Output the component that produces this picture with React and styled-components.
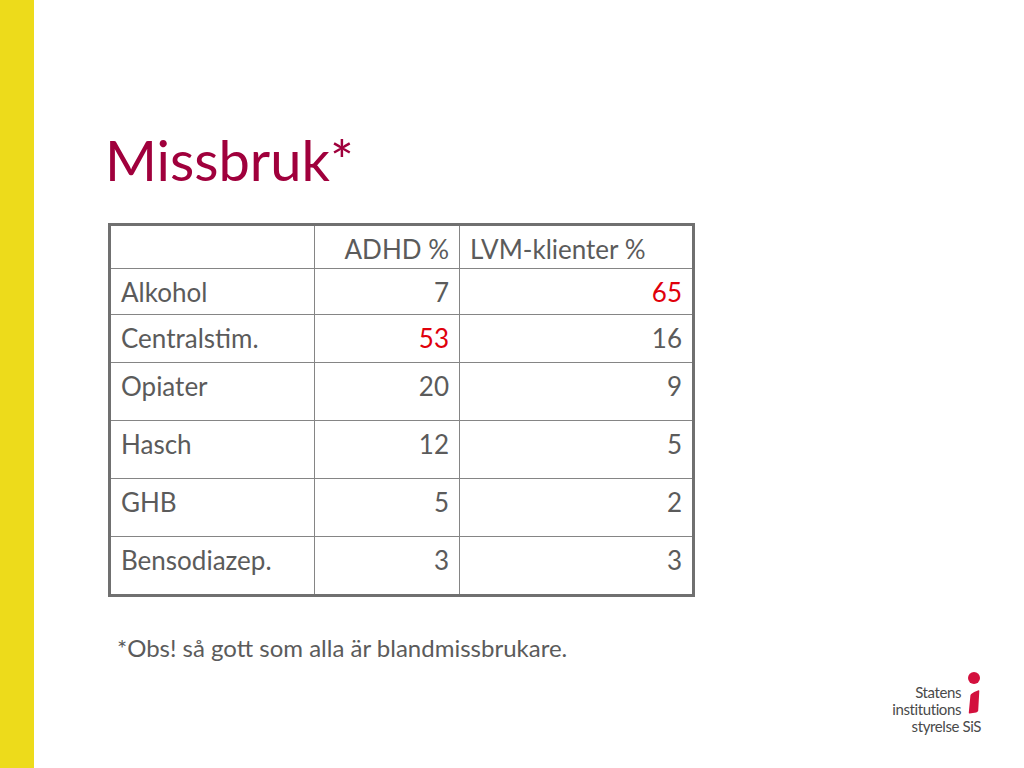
import React from "react";
import styled, { createGlobalStyle } from "styled-components";

const rows = [
  { label: "Alkohol", adhd: "7", lvm: "65", hot: "lvm", h: 46 },
  { label: "Centralstim.", adhd: "53", lvm: "16", hot: "adhd", h: 48 },
  { label: "Opiater", adhd: "20", lvm: "9", h: 58 },
  { label: "Hasch", adhd: "12", lvm: "5", h: 58 },
  { label: "GHB", adhd: "5", lvm: "2", h: 58 },
  { label: "Bensodiazep.", adhd: "3", lvm: "3", h: 59 },
];

export default function App() {
  return (
    <>
      <GlobalStyle />
      <Slide>
        <SideBar />
        <Main>
          <Title>Missbruk*</Title>
          <Table>
            <colgroup>
              <col style={{ width: 205 }} />
              <col style={{ width: 145 }} />
              <col style={{ width: 234 }} />
            </colgroup>
            <tbody>
              <Row $h={44}>
                <Cell />
                <Cell $align="right">ADHD %</Cell>
                <Cell>LVM-klienter %</Cell>
              </Row>
              {rows.map((r) => (
                <Row key={r.label} $h={r.h}>
                  <Cell>{r.label}</Cell>
                  <Cell $align="right" $hot={r.hot === "adhd"}>
                    {r.adhd}
                  </Cell>
                  <Cell $align="right" $hot={r.hot === "lvm"}>
                    {r.lvm}
                  </Cell>
                </Row>
              ))}
            </tbody>
          </Table>
          <Note>*Obs! så gott som alla är blandmissbrukare.</Note>
          <Logo>
            <LogoText>
              <span>Statens</span>
              <span>institutions</span>
              <span>styrelse SiS</span>
            </LogoText>
            <LogoMark viewBox="0 0 14 48" aria-hidden="true">
              <circle cx="7" cy="12" r="6" fill="#d3103d" />
              <path
                d="M4.2 28 Q6.5 26.1 11.6 24.3 Q12.4 24.1 12.3 25.1 L11.2 44.7 Q10.8 46.1 9.2 46.4 L2.6 47.4 Q1.6 47.5 1.8 46.4 L3.4 29.5 Q3.5 28.5 4.2 28 Z"
                fill="#d3103d"
              />
            </LogoMark>
          </Logo>
        </Main>
      </Slide>
    </>
  );
}

const GlobalStyle = createGlobalStyle`
  html, body {
    margin: 0;
    padding: 0;
    background: #ffffff;
  }
  body {
    font-family: Lato, "Open Sans", "DejaVu Sans", sans-serif;
  }
`;

const Slide = styled.div`
  display: flex;
  width: 1024px;
  height: 768px;
  overflow: hidden;
  background: #ffffff;
`;

const SideBar = styled.div`
  flex: 0 0 34px;
  background: #eddb1b;
`;

const Main = styled.div`
  flex: 1;
  display: flex;
  flex-direction: column;
  align-items: flex-start;
  padding: 132px 0 0 74px;
`;

const Title = styled.h1`
  margin: 0 0 35px -3px;
  font-family: Lato, sans-serif;
  font-weight: 400;
  font-size: 56px;
  line-height: 56px;
  color: #a0003c;
`;

const Table = styled.table`
  border-collapse: collapse;
  table-layout: fixed;
  width: 584px;
  border: 3px solid #707070;
`;

const Row = styled.tr`
  height: ${(p) => p.$h}px;
`;

const Cell = styled.td`
  border: 1.5px solid #858585;
  padding: 8px 10px 0 10px;
  vertical-align: top;
  text-align: ${(p) => p.$align || "left"};
  font-size: 26px;
  line-height: 30px;
  color: ${(p) => (p.$hot ? "#e0000b" : "#5b5b5b")};
`;

const Note = styled.p`
  margin: 37px 0 0 9px;
  font-size: 24px;
  line-height: 28px;
  color: #5b5b5b;
`;

const Logo = styled.div`
  align-self: flex-end;
  margin: auto 43px 33px 0;
  display: flex;
  align-items: flex-start;
`;

const LogoText = styled.div`
  display: flex;
  flex-direction: column;
  align-items: flex-end;
  margin-top: 18px;
  margin-right: -14px;
  font-size: 15px;
  line-height: 17px;
  letter-spacing: -0.4px;
  color: #4a4a4a;
  span:not(:last-child) {
    margin-right: 20px;
  }
`;

const LogoMark = styled.svg`
  width: 14px;
  height: 48px;
`;
